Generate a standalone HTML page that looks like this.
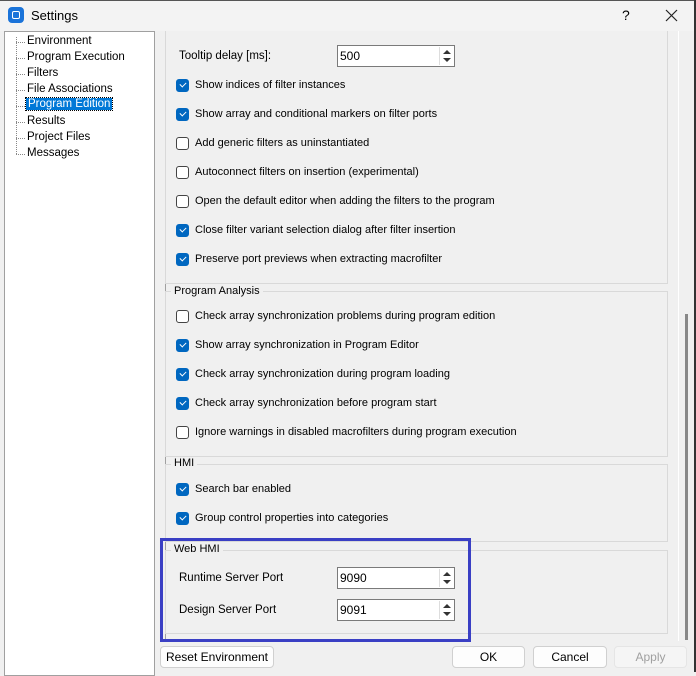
<!DOCTYPE html>
<html><head><style>
*{box-sizing:border-box}
body{margin:0;width:696px;height:672px;overflow:hidden;font-family:"Liberation Sans",sans-serif;font-size:11px;color:#000;background:#f0f0f0;position:relative}
.a{position:absolute}
.title{left:0;top:0;width:696px;height:31px;background:#f3f3f3;border-top:1px solid #555}
.tree{left:4px;top:31px;width:151px;height:645px;background:#fff;border:1px solid #a0a0a0;font-size:11.5px}
.tree div{position:absolute;left:22px;white-space:nowrap}
.tree .h{left:11px;width:9px;height:0;border-top:1px dotted #888}
.grp{border:1px solid #d9d9d9}
.gt{background:#f0f0f0;padding:0 3px}
.cb{width:13px;height:13px;border-radius:3px;border:1px solid #444;background:#fff}
.cb.on{background:#0067c0;border-color:#0067c0}
.cb.on:after{content:"";position:absolute;left:3px;top:2px;width:5px;height:3px;border-left:1px solid #fff;border-bottom:1px solid #fff;transform:rotate(-45deg)}
.sp{width:118px;height:22px;background:#fff;border:1px solid #7a7a7a;padding:3px 0 0 2px;font-size:12px}
.sp .ar{position:absolute;right:1px;top:1px;width:14px;height:18px;border-left:1px solid #ddd}
.sp .ar:before{content:"";position:absolute;left:3px;top:3px;border:4px solid transparent;border-bottom:4px solid #333;border-top:0}
.sp .ar:after{content:"";position:absolute;left:3px;top:11px;border:4px solid transparent;border-top:4px solid #333;border-bottom:0}
.btn{height:22px;background:#fdfdfd;border:1px solid #d0d0d0;border-radius:4px;text-align:center;line-height:20px;font-size:12px}
</style></head><body>
<div class="a title"></div>
<div class="a" style="left:8px;top:7px;width:16px;height:16px;border-radius:4px;background:#1a73d9"><div class="a" style="left:4px;top:4px;width:8px;height:8px;border:1.5px solid #fff;border-radius:2px"></div></div>
<div class="a" style="left:31px;top:8px;font-size:13px">Settings</div>
<div class="a" style="left:622px;top:7px;font-size:14px">?</div>
<svg class="a" style="left:665px;top:9px" width="13" height="13"><path d="M1 1L12 12M12 1L1 12" stroke="#222" stroke-width="1.2"/></svg>
<div class="a tree">
<div style="left:11px;top:5px;height:117px;border-left:1px dotted #888"></div>
<div class="h" style="top:10px"></div><div class="h" style="top:26px"></div><div class="h" style="top:42px"></div><div class="h" style="top:58px"></div><div class="h" style="top:74px"></div><div class="h" style="top:90px"></div><div class="h" style="top:106px"></div><div class="h" style="top:122px"></div>
<div style="top:3px">Environment</div><div style="top:19px">Program Execution</div><div style="top:35px">Filters</div><div style="top:51px">File Associations</div>
<div style="top:66px;left:21px;background:#0078d7;color:#fff;padding:0 2px;outline:1px dotted #000">Program Edition</div>
<div style="top:83px">Results</div><div style="top:99px">Project Files</div><div style="top:115px">Messages</div>
</div>
<div class="a" style="left:165px;top:31px;width:1px;height:610px;background:#a0a0a0"></div>
<div class="a" style="left:678px;top:31px;width:1px;height:610px;background:#fff"></div>
<div class="a" style="left:685px;top:314px;width:3px;height:326px;background:#888"></div>
<div class="a grp" style="left:165px;top:31px;width:503px;height:253px;border-top:0"></div>
<div class="a" style="left:179px;top:50px;font-size:11.5px">Tooltip delay [ms]:</div>
<div class="a sp" style="left:337px;top:45px">500<div class="ar"></div></div>
<div class="a grp" style="left:165px;top:291px;width:503px;height:166px"></div><div class="a gt" style="left:171px;top:285px">Program Analysis</div>
<div class="a grp" style="left:165px;top:464px;width:503px;height:78px"></div><div class="a gt" style="left:171px;top:457px">HMI</div>
<div class="a grp" style="left:165px;top:550px;width:503px;height:84px"></div><div class="a gt" style="left:171px;top:543px">Web HMI</div>
<div class="a" style="left:179px;top:572px;font-size:11.5px">Runtime Server Port</div>
<div class="a sp" style="left:337px;top:567px">9090<div class="ar"></div></div>
<div class="a" style="left:179px;top:604px;font-size:11.5px">Design Server Port</div>
<div class="a sp" style="left:337px;top:599px">9091<div class="ar"></div></div>
<div class="a cb on" style="left:176px;top:79px"></div><div class="a" style="left:195px;top:79px">Show indices of filter instances</div>
<div class="a cb on" style="left:176px;top:108px"></div><div class="a" style="left:195px;top:108px">Show array and conditional markers on filter ports</div>
<div class="a cb" style="left:176px;top:137px"></div><div class="a" style="left:195px;top:137px">Add generic filters as uninstantiated</div>
<div class="a cb" style="left:176px;top:166px"></div><div class="a" style="left:195px;top:166px">Autoconnect filters on insertion (experimental)</div>
<div class="a cb" style="left:176px;top:195px"></div><div class="a" style="left:195px;top:195px">Open the default editor when adding the filters to the program</div>
<div class="a cb on" style="left:176px;top:224px"></div><div class="a" style="left:195px;top:224px">Close filter variant selection dialog after filter insertion</div>
<div class="a cb on" style="left:176px;top:253px"></div><div class="a" style="left:195px;top:253px">Preserve port previews when extracting macrofilter</div>
<div class="a cb" style="left:176px;top:310px"></div><div class="a" style="left:195px;top:310px">Check array synchronization problems during program edition</div>
<div class="a cb on" style="left:176px;top:339px"></div><div class="a" style="left:195px;top:339px">Show array synchronization in Program Editor</div>
<div class="a cb on" style="left:176px;top:368px"></div><div class="a" style="left:195px;top:368px">Check array synchronization during program loading</div>
<div class="a cb on" style="left:176px;top:397px"></div><div class="a" style="left:195px;top:397px">Check array synchronization before program start</div>
<div class="a cb" style="left:176px;top:426px"></div><div class="a" style="left:195px;top:426px">Ignore warnings in disabled macrofilters during program execution</div>
<div class="a cb on" style="left:176px;top:483px"></div><div class="a" style="left:195px;top:483px">Search bar enabled</div>
<div class="a cb on" style="left:176px;top:512px"></div><div class="a" style="left:195px;top:512px">Group control properties into categories</div>
<div class="a" style="left:160px;top:538px;width:311px;height:104px;border:3px solid #3a3fc4"></div>
<div class="a btn" style="left:160px;top:646px;width:114px">Reset Environment</div>
<div class="a btn" style="left:452px;top:646px;width:73px">OK</div>
<div class="a btn" style="left:533px;top:646px;width:74px">Cancel</div>
<div class="a btn" style="left:614px;top:646px;width:73px;color:#a0a0a0;border-color:#e5e5e5;background:#f5f5f5">Apply</div>
<div class="a" style="left:694px;top:0;width:2px;height:672px;background:#333"></div>
</body></html>
